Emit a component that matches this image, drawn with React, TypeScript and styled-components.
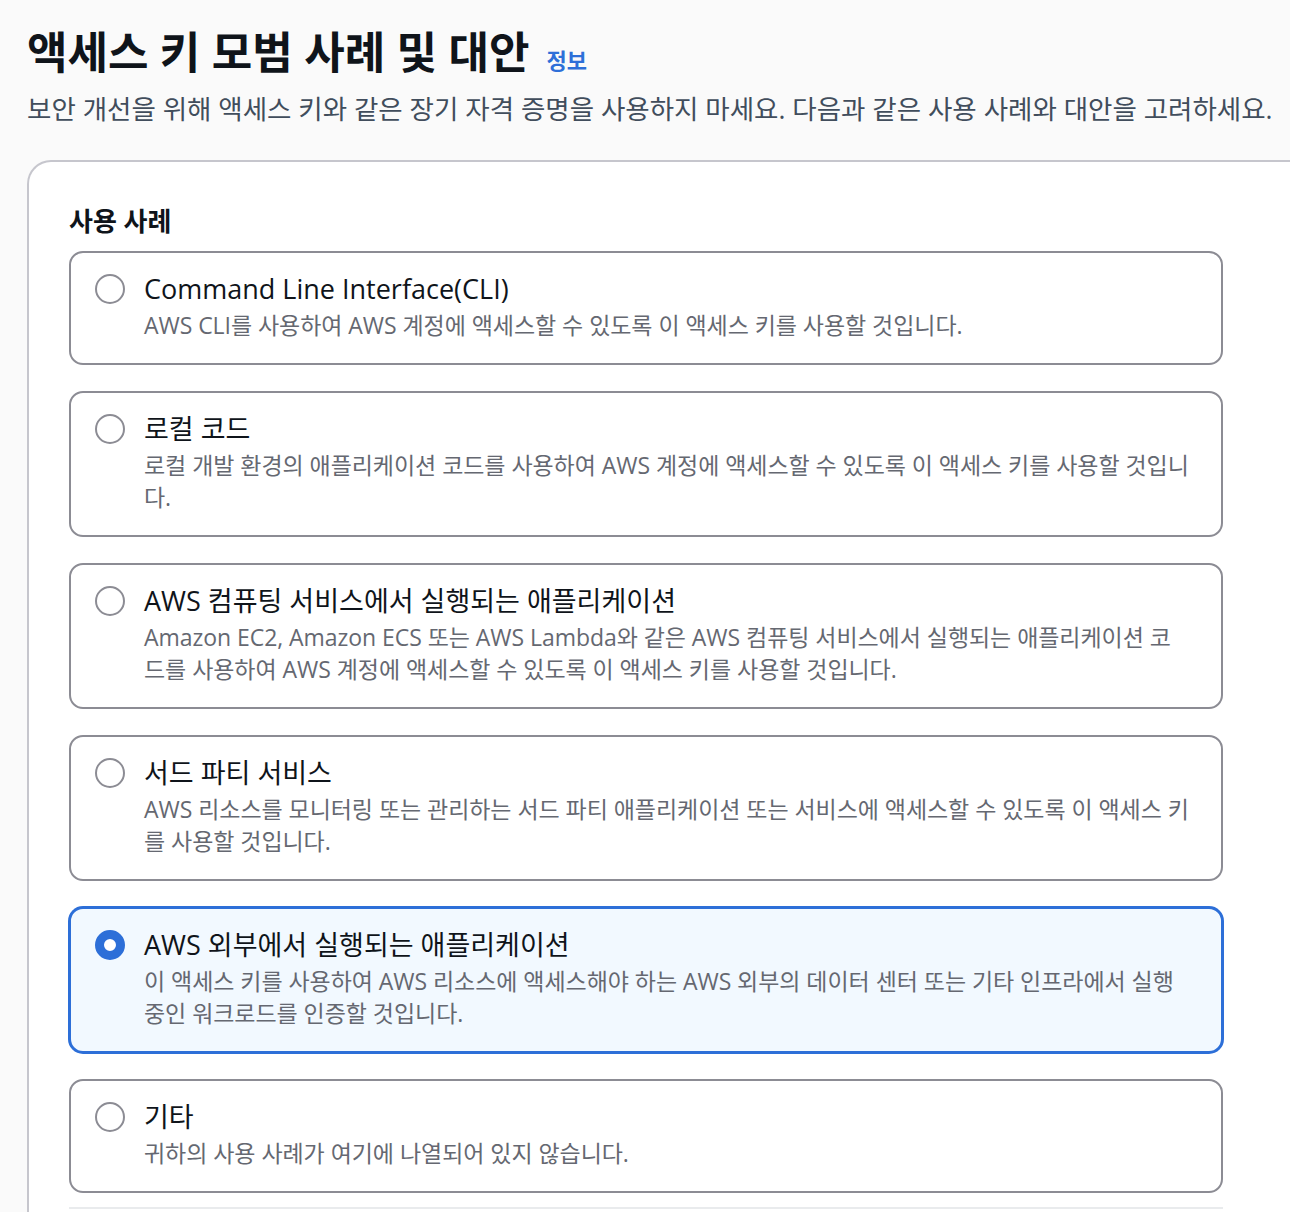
import styled, { createGlobalStyle } from "styled-components";

const GlobalStyle = createGlobalStyle`
  * {
    box-sizing: border-box;
  }
  body {
    margin: 0;
    background-color: #fafafa;
    font-family: "Open Sans", "Noto Sans CJK KR", sans-serif;
    color: #0f141a;
    overflow: hidden;
  }
`;

type UseCase = {
  title: string;
  desc: string;
  selected?: boolean;
};

const USE_CASES: UseCase[] = [
  {
    title: "Command Line Interface(CLI)",
    desc: "AWS CLI를 사용하여 AWS 계정에 액세스할 수 있도록 이 액세스 키를 사용할 것입니다.",
  },
  {
    title: "로컬 코드",
    desc: "로컬 개발 환경의 애플리케이션 코드를 사용하여 AWS 계정에 액세스할 수 있도록 이 액세스 키를 사용할 것입니다.",
  },
  {
    title: "AWS 컴퓨팅 서비스에서 실행되는 애플리케이션",
    desc: "Amazon EC2, Amazon ECS 또는 AWS Lambda와 같은 AWS 컴퓨팅 서비스에서 실행되는 애플리케이션 코드를 사용하여 AWS 계정에 액세스할 수 있도록 이 액세스 키를 사용할 것입니다.",
  },
  {
    title: "서드 파티 서비스",
    desc: "AWS 리소스를 모니터링 또는 관리하는 서드 파티 애플리케이션 또는 서비스에 액세스할 수 있도록 이 액세스 키를 사용할 것입니다.",
  },
  {
    title: "AWS 외부에서 실행되는 애플리케이션",
    desc: "이 액세스 키를 사용하여 AWS 리소스에 액세스해야 하는 AWS 외부의 데이터 센터 또는 기타 인프라에서 실행 중인 워크로드를 인증할 것입니다.",
    selected: true,
  },
  {
    title: "기타",
    desc: "귀하의 사용 사례가 여기에 나열되어 있지 않습니다.",
  },
];

const App = () => {
  return (
    <>
      <GlobalStyle />
      <Page>
        <Header>
          <TitleRow>
            <Title>액세스 키 모범 사례 및 대안</Title>
            <InfoLink href="#">정보</InfoLink>
          </TitleRow>
          <Subtitle>
            보안 개선을 위해 액세스 키와 같은 장기 자격 증명을 사용하지 마세요. 다음과 같은 사용 사례와 대안을 고려하세요.
          </Subtitle>
        </Header>
        <Container>
          <SectionTitle>사용 사례</SectionTitle>
          <TileList>
            {USE_CASES.map((item) => (
              <Tile key={item.title} $selected={item.selected}>
                <Radio $selected={item.selected} />
                <TileText>
                  <TileTitle>{item.title}</TileTitle>
                  <TileDesc>{item.desc}</TileDesc>
                </TileText>
              </Tile>
            ))}
          </TileList>
          <Divider />
        </Container>
      </Page>
    </>
  );
};

export default App;

const Page = styled.div`
  padding: 25px 0 0 27px;
  width: 1290px;
  height: 1212px;
`;

const Header = styled.div`
  display: flex;
  flex-direction: column;
  gap: 13px;
`;

const TitleRow = styled.div`
  display: flex;
  align-items: baseline;
  gap: 17px;
`;

const Title = styled.h1`
  margin: 0;
  font-size: 44px;
  line-height: 54px;
  font-weight: 700;
  color: #0f141a;
`;

const InfoLink = styled.a`
  font-size: 22px;
  font-weight: 700;
  color: #2d6fd8;
  text-decoration: none;
`;

const Subtitle = styled.p`
  margin: 0;
  font-size: 26.5px;
  line-height: 34px;
  color: #414d5c;
  white-space: nowrap;
`;

const Container = styled.div`
  margin-top: 34px;
  width: 1320px;
  padding: 41px 0 0 40px;
  background-color: #ffffff;
  border: 2px solid #c6c6cd;
  border-right: none;
  border-bottom: none;
  border-radius: 24px 0 0 0;
  min-height: 1100px;
`;

const SectionTitle = styled.h2`
  margin: 0 0 12px 0;
  font-size: 26px;
  line-height: 36px;
  font-weight: 700;
  color: #0f141a;
`;

const TileList = styled.div`
  display: flex;
  flex-direction: column;
  gap: 26px;
  width: 1154px;
`;

const Tile = styled.div<{ $selected?: boolean }>`
  display: flex;
  align-items: flex-start;
  gap: 19px;
  padding: 18px 30px 22px 24px;
  border: 2px solid ${(p) => (p.$selected ? "#2d6fd8" : "#8c8c94")};
  border-radius: 14px;
  background-color: ${(p) => (p.$selected ? "#f2f9ff" : "#ffffff")};
  box-shadow: ${(p) => (p.$selected ? "0 0 0 1px #2d6fd8" : "none")};
`;

const Radio = styled.span<{ $selected?: boolean }>`
  flex: none;
  margin-top: 3px;
  width: 30px;
  height: 30px;
  border-radius: 50%;
  border: ${(p) => (p.$selected ? "9px solid #2d6fd8" : "2px solid #8c8c94")};
  background-color: #ffffff;
`;

const TileText = styled.div`
  display: flex;
  flex-direction: column;
  gap: 2px;
  min-width: 0;
`;

const TileTitle = styled.div`
  font-size: 27px;
  line-height: 36px;
  color: #0f141a;
`;

const TileDesc = styled.div`
  font-size: 23px;
  line-height: 32px;
  letter-spacing: -0.05px;
  color: #656871;
`;

const Divider = styled.div`
  margin-top: 14px;
  width: 1154px;
  height: 2px;
  background-color: #e9ebed;
`;
